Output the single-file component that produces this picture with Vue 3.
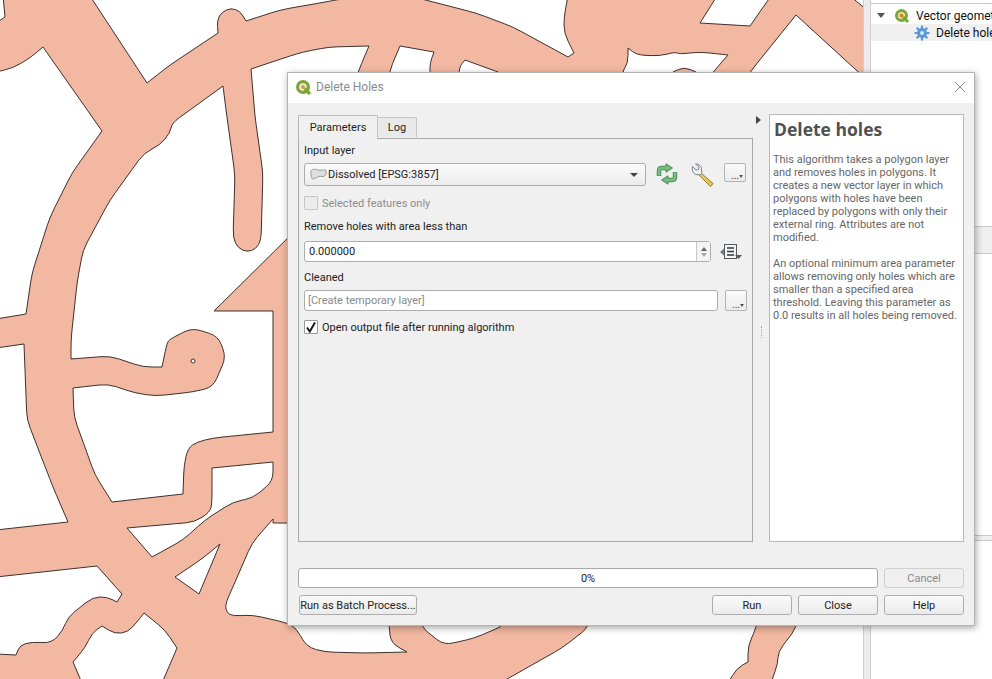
<script setup>
const whites = [
  '0,0 3,0 5,17 0,23',
  '90,0 147,83 170,65 218,33 217,20 222,12 231,8 240,11 246,21 280,10 325,2 359,0',
  '410,0 476,13 513,27 568,57 574,53 564,33 564,17 568,0',
  '717,0 700,23 750,26 771,0',
  '850,0 863,10 863,0',
  '796,15 750,72 740,90 863,90 863,80',
  '628,48 637,55 660,56 675,52 679,54 701,52 728,55 713,72 700,90 696,72 684,67 673,72 670,90 622,90 622,72 628,63',
  '400,46 434,52 430,63 430,72 430,90 389,90 389,72',
  '465,60 498,72 498,90 459,90 459,67',
  '223,86 227,117 235,175 233,238 238,248 247,252 256,249 261,240 263,173 255,117 251,69 290,56 303,52 329,47 369,46 358,72 350,100 300,100 300,226 214,311 273,311 273,432 213,438 197,442 188,448 184,465 183,494 112,502 95,475 74,417 73,388 108,384 135,393 155,396 193,392 213,387 226,357 218,336 192,328 170,339 167,343 162,367 143,367 110,356 71,359 71,340 77,283 83,250 110,200 144,153 160,145 170,133 172,123',
  '0,72 13,68 30,58 43,47 102,131 72,173 50,217 32,273 26,314 0,319',
  '0,348 24,344 27,420 53,487 68,522 0,530',
  '0,577 97,566 122,594 117,602 107,597 93,597 68,617 63,630 52,643 32,642 20,645 16,655 0,654',
  '273,462 212,468 212,503 210,512 195,522 127,528 152,557 183,540 205,520 233,502 253,498 273,481',
  '220,544 203,558 175,577 199,594',
  '273,519 273,523 389,523 389,627 391,643 407,652 366,653 325,652 307,647 296,628 287,623 253,615 233,616 227,613 225,605 252,543',
  '144,613 165,630 177,648 162,679 82,679 73,662 85,648 92,633 102,626 115,634 128,632 137,622',
  '421,627 444,645 475,638 500,627 500,600 421,600',
  '589,627 562,648 500,679 728,679 737,668 748,662 748,645 757,627 757,600 589,600',
  '797,627 778,652 778,663 771,679 863,679 863,600 797,600',
]

const bleed = ([x, y]) => [x === 0 ? -4 : x === 863 ? 867 : x, y === 0 ? -4 : y === 679 ? 683 : y]

function smoothPath(str) {
  const pts = str.split(' ').map((p) => bleed(p.split(',').map(Number)))
  const n = pts.length
  const toward = (a, b, d) => {
    const len = Math.hypot(b[0] - a[0], b[1] - a[1]) || 1
    const t = Math.min(d, len / 2) / len
    return [a[0] + (b[0] - a[0]) * t, a[1] + (b[1] - a[1]) * t]
  }
  let d = ''
  for (let i = 0; i <= n; i++) {
    const v = pts[i % n]
    const prev = pts[(i - 1 + n) % n]
    const next = pts[(i + 1) % n]
    const a1 = Math.atan2(v[1] - prev[1], v[0] - prev[0])
    const a2 = Math.atan2(next[1] - v[1], next[0] - v[0])
    let turn = Math.abs(a2 - a1)
    if (turn > Math.PI) turn = 2 * Math.PI - turn
    const soft = turn < 0.95
    const a = soft ? toward(v, prev, 9) : v
    const b = soft ? toward(v, next, 9) : v
    if (i === 0) {
      d += `M${b[0].toFixed(1)} ${b[1].toFixed(1)}`
    } else if (soft) {
      d += `L${a[0].toFixed(1)} ${a[1].toFixed(1)}Q${v[0]} ${v[1]} ${b[0].toFixed(1)} ${b[1].toFixed(1)}`
    } else {
      d += `L${v[0]} ${v[1]}`
    }
  }
  return d + 'Z'
}
const holes = whites.map(smoothPath)

const helpOne = 'This algorithm takes a polygon layer and removes holes in polygons. It creates a new vector layer in which polygons with holes have been replaced by polygons with only their external ring. Attributes are not modified.'
const helpTwo = 'An optional minimum area parameter allows removing only holes which are smaller than a specified area threshold. Leaving this parameter as 0.0 results in all holes being removed.'
</script>

<template>
  <div class="screen">
    <svg class="map" width="863" height="679" viewBox="0 0 863 679">
      <rect width="863" height="679" fill="#f2b8a2" />
      <path v-for="(p, i) in holes" :key="i" :d="p" fill="#fff" stroke="#3e302b" stroke-width="1" stroke-linejoin="round" />
      <circle cx="193" cy="361" r="2" fill="#fff" stroke="#3e302b" stroke-width="1" />
    </svg>

    <aside class="side">
      <div class="strip"></div>
      <div class="tree">
        <div class="tree-row">
          <span class="caret"></span>
          <svg class="tree-q" width="16" height="16" viewBox="0 0 16 16">
            <circle cx="7.500" cy="7.500" r="5" fill="#f4e3b0" stroke="#7ba63a" stroke-width="3" />
            <circle cx="7.500" cy="7.500" r="2" fill="#c9862e" />
            <path d="M9 9l5 5" stroke="#7ba63a" stroke-width="3" />
          </svg>
          <span>Vector geometry</span>
        </div>
        <div class="tree-row child">
          <svg width="16" height="16" viewBox="0 0 16 16">
            <circle cx="8" cy="8" r="5" fill="#5b96d6" />
            <path d="M8 0.500v15M0.500 8h15M2.700 2.700l10.600 10.600M13.300 2.700L2.700 13.300" stroke="#5b96d6" stroke-width="2.200" />
            <circle cx="8" cy="8" r="2" fill="#d6e6f7" />
          </svg>
          <span>Delete holes</span>
        </div>
        <div class="side-band"></div>
        <div class="side-band low"></div>
      </div>
    </aside>

    <section class="dialog">
      <header class="titlebar">
        <svg width="17" height="17" viewBox="0 0 17 17">
          <circle cx="8" cy="8" r="5.400" fill="#f6f1d8" stroke="#7ba63a" stroke-width="3.200" />
          <circle cx="8" cy="8" r="2" fill="#d39a3c" />
          <path d="M9.500 9.500l5.500 5.500" stroke="#7ba63a" stroke-width="3.200" />
        </svg>
        <span class="title">Delete Holes</span>
        <svg class="close" width="12" height="12" viewBox="0 0 12 12">
          <path d="M1 1l10 10M11 1L1 11" stroke="#8a8a8a" stroke-width="1" fill="none" />
        </svg>
      </header>

      <div class="body">
        <div class="main">
          <div class="left">
            <div class="tabs">
              <span class="tab active">Parameters</span>
              <span class="tab">Log</span>
            </div>
            <div class="pane">
              <label class="lbl first">Input layer</label>
              <div class="row layer-row">
                <div class="combo">
                  <svg width="17" height="13" viewBox="0 0 17 13">
                    <path d="M1 3C2.500 .5 6 1 8 2s5-.5 7.500 0c1.500 2.500.5 5-1 6-2 1.500-4-.5-6 .5S3 12 2 10.500C1 8 .5 5 1 3z" fill="#dedede" stroke="#9a9a9a" />
                  </svg>
                  <span>Dissolved [EPSG:3857]</span>
                  <i class="drop"></i>
                </div>
                <svg class="sync" width="24" height="22" viewBox="0 0 24 22">
                  <g fill="none" stroke="#4c8c57" stroke-width="4.400">
                    <path d="M4 13V8q0-3 3-3h5" />
                    <path d="M20 9v5q0 3-3 3h-5" />
                  </g>
                  <path d="M11 .8l6.500 4.200L11 9.200z" fill="#74b978" stroke="#4c8c57" />
                  <path d="M13 12.800L6.500 17l6.500 4.200z" fill="#74b978" stroke="#4c8c57" />
                  <g fill="none" stroke="#7cc081" stroke-width="2.400">
                    <path d="M4 12.500V8q0-3 3-3h5" />
                    <path d="M20 9.500V14q0 3-3 3h-5" />
                  </g>
                </svg>
                <svg class="wrench" width="26" height="26" viewBox="0 0 26 26">
                  <path d="M11 10l12 10.500-2.500 3L9 12z" fill="#e8c95a" stroke="#8d7a35" />
                  <path d="M2.500 3.500L6 7l2.500-.5L9 4 5.500 1C9 .5 12 3.500 11.500 7L12 10l-2 2-3-.5C4 12 1.500 8 2.500 3.500z" fill="#eceff1" stroke="#7d8488" />
                </svg>
                <button class="dots"><span>...</span><i></i></button>
              </div>
              <div class="check disabled">
                <span class="box"></span>
                <span>Selected features only</span>
              </div>
              <label class="lbl area">Remove holes with area less than</label>
              <div class="row spin-row">
                <div class="spin">
                  <span class="val">0.000000</span>
                  <span class="arrows"><i class="up"></i><i class="down"></i></span>
                </div>
                <svg class="defined" width="24" height="18" viewBox="0 0 24 18">
                  <path d="M1 9l5-4.500v9z" fill="#77797b" />
                  <rect x="5.500" y="1.500" width="12" height="14" fill="#f4f4f4" stroke="#55585b" />
                  <path d="M8 5h7M8 8.500h7M8 12h7" stroke="#33363a" stroke-width="1.300" />
                  <path d="M16 12h7l-3.500 4z" fill="#55585b" />
                </svg>
              </div>
              <label class="lbl cleaned">Cleaned</label>
              <div class="row out-row">
                <div class="edit">[Create temporary layer]</div>
                <button class="dots tall"><span>...</span><i></i></button>
              </div>
              <div class="check open">
                <span class="box on">
                  <svg width="12" height="12" viewBox="0 0 12 12"><path d="M2 6.500L4.800 10.500L10 1.500" fill="none" stroke="#1a1a1a" stroke-width="2" /></svg>
                </span>
                <span>Open output file after running algorithm</span>
              </div>
            </div>
          </div>

          <div class="splitter">
            <i class="tri"></i>
            <i class="grip"></i>
          </div>

          <article class="help">
            <h2>Delete holes</h2>
            <p>{{ helpOne }}</p>
            <p>{{ helpTwo }}</p>
          </article>
        </div>

        <div class="progress-row">
          <div class="progress">0%</div>
          <button class="btn off">Cancel</button>
        </div>
        <div class="button-row">
          <button class="btn batch">Run as Batch Process...</button>
          <span class="spacer"></span>
          <button class="btn">Run</button>
          <button class="btn">Close</button>
          <button class="btn">Help</button>
        </div>
      </div>
    </section>
  </div>
</template>

<style>
html, body { margin: 0; overflow: hidden; background: #fff; }
</style>

<style scoped>
.screen {
  position: relative;
  width: 992px;
  height: 679px;
  display: flex;
  overflow: hidden;
  font-family: Roboto, "Liberation Sans", sans-serif;
  font-size: 11px;
  color: #222;
}
.map { display: block; flex: none; }
.side { flex: 1; display: flex; min-width: 0; }
.strip {
  width: 6px;
  background: #ececec;
  border-left: 1px solid #cfcfcf;
  border-right: 1px solid #cfcfcf;
}
.tree {
  position: relative;
  flex: 1;
  min-width: 0;
  overflow: hidden;
  margin-top: 3px;
  padding-top: 3px;
  border-top: 1px solid #c8c8c8;
  background: #fff;
  font-size: 12px;
  white-space: nowrap;
}
.tree-row { display: flex; align-items: center; height: 17px; color: #111; }
.tree-row svg { flex: none; }
.tree-row .caret {
  flex: none;
  width: 0; height: 0;
  margin: 0 0 0 6px;
  border-left: 4px solid transparent;
  border-right: 4px solid transparent;
  border-top: 5px solid #555;
}
.tree-q { margin: 0 6px 0 9px; }
.child { background: #f0f0f0; padding-left: 43px; gap: 6px; }
.side-band {
  position: absolute;
  left: 0; right: 0;
  top: 222px;
  height: 26px;
  background: #f0f0f0;
  border-top: 1px solid #c8c8c8;
  border-bottom: 1px solid #c8c8c8;
}
.side-band.low { top: 531px; height: 4px; }

.dialog {
  position: absolute;
  left: 287px;
  top: 72px;
  width: 688px;
  height: 554px;
  box-sizing: border-box;
  border: 1px solid #b4b4b4;
  background: #f0f0f0;
  box-shadow: 1px 2px 7px rgba(0, 0, 0, .35);
  display: flex;
  flex-direction: column;
}
.titlebar {
  flex: none;
  box-sizing: border-box;
  height: 30px;
  background: #fff;
  display: flex;
  align-items: center;
  padding: 0 8px 2px 7px;
}
.title { margin-left: 4px; color: #8b8b8b; font-size: 12px; }
.close { margin-left: auto; }
.body { flex: 1; display: flex; flex-direction: column; padding: 11px 10px 0 10px; min-height: 0; }
.main { display: flex; height: 428px; flex: none; }
.left { width: 455px; flex: none; display: flex; flex-direction: column; }
.tabs { display: flex; align-items: flex-end; height: 24px; position: relative; z-index: 1; }
.tab {
  box-sizing: border-box;
  height: 20px;
  width: 40px;
  line-height: 19px;
  text-align: center;
  border: 1px solid #c4c4c4;
  border-bottom: none;
  background: #e9e9e9;
  border-radius: 2px 2px 0 0;
  margin-bottom: 1px;
  margin-left: -1px;
}
.tab.active {
  width: 80px;
  height: 24px;
  line-height: 24px;
  background: #f0f0f0;
  border-color: #b8b8b8;
  margin-bottom: -1px;
  margin-left: 0;
}
.pane {
  box-sizing: border-box;
  flex: 1;
  border: 1px solid #a9a9a9;
  padding: 0 5px 0 5px;
}
.lbl { display: block; line-height: 14px; color: #222; }
.lbl.first { margin-top: 5px; }
.lbl.area { margin-top: 10px; }
.lbl.cleaned { margin-top: 9px; }
.row { display: flex; align-items: flex-start; }
.layer-row { margin-top: 5px; height: 24px; }
.combo {
  box-sizing: border-box;
  width: 342px;
  height: 23px;
  display: flex;
  align-items: center;
  gap: 1px;
  padding: 0 7px 0 5px;
  border: 1px solid #adadad;
  border-radius: 3px;
  background: linear-gradient(#fbfbfb, #ececec);
}
.combo svg { flex: none; }
.drop {
  margin: 0 0 0 auto;
  width: 0; height: 0;
  border-left: 4px solid transparent;
  border-right: 4px solid transparent;
  border-top: 4px solid #444;
}
.sync { margin: 0 0 0 9px; flex: none; }
.wrench { margin: 0 0 0 11px; flex: none; }
.dots {
  box-sizing: border-box;
  width: 22px;
  height: 19px;
  margin-left: 8px;
  padding: 0;
  position: relative;
  background: linear-gradient(#fafafa, #ececec);
  border: 1px solid #b3b3b3;
  border-radius: 2px;
  font: inherit;
  color: #333;
}
.dots span { position: absolute; left: 6px; bottom: 0; line-height: 10px; font-size: 10px; }
.dots i {
  position: absolute;
  right: 2px;
  bottom: 3px;
  border-left: 2.500px solid transparent;
  border-right: 2.500px solid transparent;
  border-top: 3px solid #555;
}
.dots.tall { height: 21px; margin-left: 7px; }
.check { display: flex; align-items: center; gap: 4px; height: 14px; }
.check.disabled { margin-top: 9px; color: #8c8c8c; }
.check.open { margin-top: 9px; }
.box {
  box-sizing: border-box;
  width: 14px;
  height: 14px;
  border: 1px solid #c6c6c6;
  border-radius: 1px;
  background: #ececec;
}
.box.on { background: #fff; border-color: #9a9a9a; display: flex; align-items: center; justify-content: center; }
.spin-row { margin-top: 7px; }
.spin {
  box-sizing: border-box;
  width: 407px;
  height: 21px;
  display: flex;
  align-items: center;
  padding-left: 4px;
  background: #fff;
  border: 1px solid #adadad;
  border-radius: 3px;
}
.val { flex: 1; }
.arrows {
  box-sizing: border-box;
  width: 14px;
  height: 19px;
  border-left: 1px solid #c8c8c8;
  background: #f4f4f4;
  display: flex;
  flex-direction: column;
  align-items: center;
  justify-content: center;
  gap: 2px;
}
.up { border-left: 3.500px solid transparent; border-right: 3.500px solid transparent; border-bottom: 4px solid #666; }
.down { border-left: 3.500px solid transparent; border-right: 3.500px solid transparent; border-top: 4px solid #aaa; }
.defined { margin: 2px 0 0 8px; flex: none; }
.out-row { margin-top: 5px; }
.edit {
  box-sizing: border-box;
  width: 414px;
  height: 21px;
  line-height: 19px;
  padding-left: 3px;
  color: #8a8a8a;
  background: #fff;
  border: 1px solid #adadad;
  border-radius: 3px;
}
.splitter { position: relative; width: 16px; flex: none; }
.tri {
  position: absolute;
  left: 3px;
  top: 2px;
  border-top: 4px solid transparent;
  border-bottom: 4px solid transparent;
  border-left: 5px solid #444;
}
.grip {
  position: absolute;
  left: 8px;
  top: 212px;
  height: 12px;
  border-left: 1px dotted #aaa;
}
.help {
  box-sizing: border-box;
  width: 195px;
  flex: none;
  background: #fff;
  border: 1px solid #b8b8b8;
  padding: 4px 3px;
  color: #666;
  line-height: 13px;
  overflow: hidden;
}
.help h2 {
  margin: 0 0 14px 1px;
  font-family: "Open Sans", sans-serif;
  font-size: 17.500px;
  line-height: 20px;
  font-weight: 700;
  color: #505050;
}
.help p { margin: 0 0 13px 0; }
.progress-row { display: flex; gap: 6px; margin-top: 26px; height: 20px; flex: none; }
.progress {
  box-sizing: border-box;
  width: 580px;
  line-height: 19px;
  text-align: center;
  background: #fff;
  border: 1px solid #a9a9a9;
  border-radius: 3px;
}
.button-row { display: flex; gap: 6px; margin-top: 7px; height: 20px; flex: none; }
.spacer { flex: 1; }
.btn {
  box-sizing: border-box;
  width: 80px;
  height: 20px;
  padding: 0;
  background: linear-gradient(#fafafa, #ebebeb);
  border: 1px solid #adadad;
  border-radius: 3px;
  font: inherit;
  color: #222;
  white-space: nowrap;
}
.btn.off { color: #8a8a8a; border-color: #cfcfcf; background: #efefef; }
.btn.batch { width: 118px; margin-left: 1px; }
</style>
